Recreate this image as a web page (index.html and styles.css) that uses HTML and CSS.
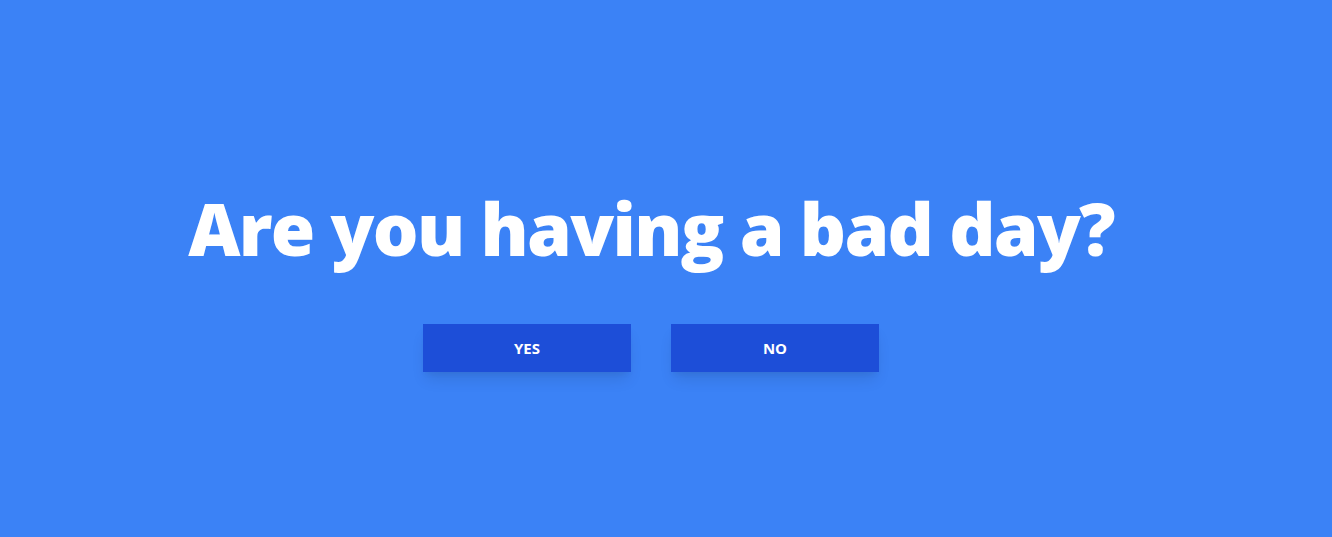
FILE: index.html
```html
<!DOCTYPE html>
<html lang="en">
<head>
<meta charset="utf-8">
<title>Bad day</title>
<link rel="stylesheet" href="styles.css">
</head>
<body>
<main class="screen">
  <h1 class="title">Are you having a bad day?</h1>
  <div class="actions">
    <button class="btn">Yes</button>
    <button class="btn">No</button>
  </div>
</main>
</body>
</html>
```

FILE: styles.css
```css
html, body {
  margin: 0;
  padding: 0;
  height: 100%;
}
body {
  background: #3b82f6;
  font-family: "Open Sans", "Noto Sans", sans-serif;
  color: #fff;
}
.screen {
  height: 100%;
  box-sizing: border-box;
  padding: 26px 30px 0 0;
  display: flex;
  flex-direction: column;
  align-items: center;
  justify-content: center;
}
.title {
  margin: 0;
  font-size: 72px;
  font-weight: 800;
  line-height: 1;
  letter-spacing: -1.7px;
}
.actions {
  display: flex;
  gap: 40px;
  margin-top: 60px;
}
.btn {
  width: 208px;
  height: 48px;
  border: 0;
  background: #1d4ed8;
  color: #fff;
  font-family: "Open Sans", sans-serif;
  font-weight: 700;
  font-size: 15px;
  text-transform: uppercase;
  box-shadow: 0 10px 15px -3px rgba(0,0,0,0.1), 0 4px 6px -2px rgba(0,0,0,0.05);
  cursor: pointer;
}
```
